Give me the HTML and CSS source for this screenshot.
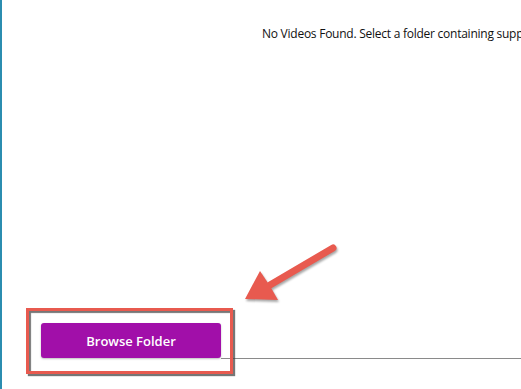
FILE: index.html
```html
<!DOCTYPE html>
<html>
<head>
<meta charset="utf-8">
<link rel="stylesheet" href="styles.css">
</head>
<body>
<div class="app">
  <div class="message">No Videos Found. Select a folder containing supported videos.</div>
  <div class="spacer"></div>
  <div class="footer">
    <button class="browse">Browse Folder</button>
    <div class="rule"></div>
  </div>
</div>
<div class="highlight"></div>
<svg class="arrow" width="120" height="80" viewBox="0 0 120 80">
  <line x1="103" y1="13" x2="40" y2="50" stroke="#e85a4f" stroke-width="7" stroke-linecap="round"/>
  <polygon points="15,64 48,65 40,51 30,36" fill="#e85a4f"/>
</svg>
</body>
</html>
```
FILE: styles.css
```css
html, body {
  margin: 0;
  padding: 0;
  height: 100%;
  background: #ffffff;
  overflow: hidden;
}
.app {
  height: 389px;
  border-left: 2px solid #2b8db0;
  box-sizing: border-box;
  display: flex;
  flex-direction: column;
  font-family: "Open Sans", "Noto Sans", sans-serif;
}
.message {
  padding: 25px 0 0 260px;
  font-size: 12px;
  letter-spacing: -0.25px;
  color: #111111;
  white-space: nowrap;
  overflow: hidden;
}
.spacer {
  flex: 1;
}
.footer {
  display: flex;
  align-items: flex-end;
  padding: 0 0 31px 39px;
}
.browse {
  width: 180px;
  height: 35px;
  border: none;
  border-radius: 3px;
  background: #a10fa9;
  color: #ffffff;
  font-family: "Open Sans", "Noto Sans", sans-serif;
  font-weight: 600;
  font-size: 13px;
  box-shadow: 0 1px 2px rgba(0,0,0,0.25);
  padding: 0;
}
.rule {
  flex: 1;
  height: 1px;
  background: #8a8a8a;
  margin-bottom: -1px;
}
.highlight {
  position: absolute;
  left: 26px;
  top: 308px;
  width: 201px;
  height: 60px;
  border: 3px solid #e85a4f;
  box-shadow: 2px 2px 1px rgba(60,60,60,0.7), inset 2px 2px 1px rgba(60,60,60,0.7);
  background: transparent;
}
.arrow {
  position: absolute;
  left: 230px;
  top: 235px;
  filter: drop-shadow(1px 2px 1px rgba(0,0,0,0.35));
}
```
